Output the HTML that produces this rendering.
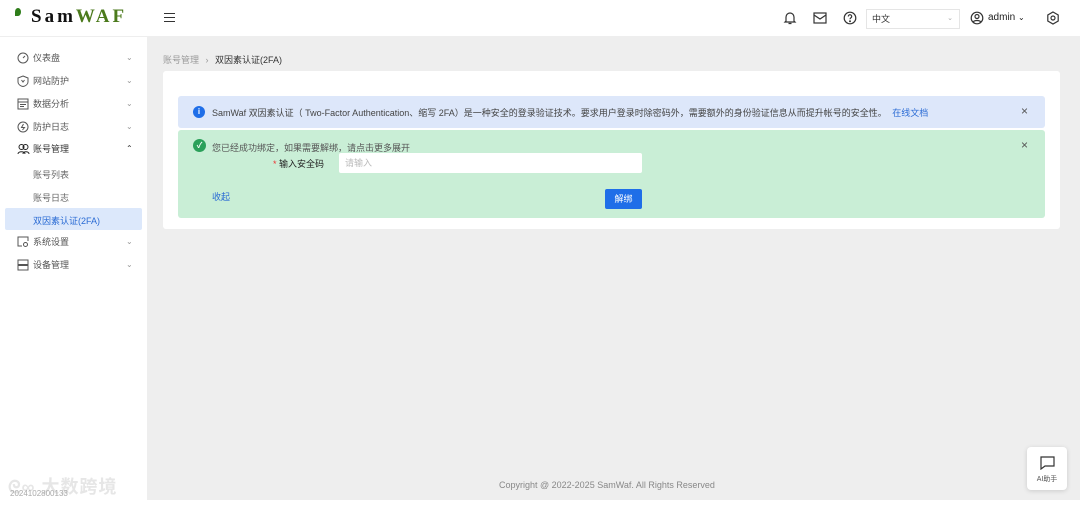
<!DOCTYPE html>
<html><head><meta charset="utf-8"><style>
*{box-sizing:border-box;margin:0;padding:0}
body{width:1080px;height:506px;overflow:hidden;background:#fff;font-family:"Liberation Sans","Noto Sans CJK SC",sans-serif;font-size:9px;color:#333;position:relative}
.hdr{position:absolute;left:0;top:0;width:1080px;height:37px;background:#fff;border-bottom:1px solid #eee}
.side{position:absolute;left:0;top:37px;width:147px;height:469px;background:#fff}
.main{position:absolute;left:147px;top:37px;width:933px;height:463px;background:#eeeeee}
.mi{position:absolute;left:17px;height:20px;line-height:20px;font-size:9px;color:#555;width:120px}
.mi svg{position:absolute;left:0;top:4px}
.mi span{position:absolute;left:16px}
.mi .ar{position:absolute;left:109px;top:0;color:#999;font-size:8px}
.sub{position:absolute;left:33px;font-size:9px;color:#666}
.card{position:absolute;left:16px;top:34px;width:897px;height:158px;background:#fff;border-radius:3px}
.info{position:absolute;left:15px;top:25px;width:867px;height:32px;background:#dde7fa;border-radius:3px}
.succ{position:absolute;left:15px;top:59px;width:867px;height:88px;background:#c9eed6;border-radius:3px}
</style></head><body>
<div class="hdr">
 <div style="position:absolute;left:15px;top:8px;width:6px;height:8px;background:#2e7d1a;border-radius:50% 50% 50% 0"></div>
 <div style="position:absolute;left:31px;top:6px;font-family:'Liberation Serif',serif;font-weight:bold;font-size:19px;letter-spacing:3px"><span style="color:#111">Sam</span><span style="color:#4b7a1c">WAF</span></div>
 <div style="position:absolute;left:164px;top:13px;width:11px;height:9px;border-top:1.5px solid #333;border-bottom:1.5px solid #333"><div style="margin-top:2.5px;height:1.5px;background:#333"></div></div>
 <svg style="position:absolute;left:783px;top:11px" width="14" height="14" viewBox="0 0 14 14" fill="none" stroke="#333" stroke-width="1.2"><path d="M3 10V6a4 4 0 018 0v4l1 1H2z M5.5 12.5h3"/></svg>
 <svg style="position:absolute;left:813px;top:12px" width="14" height="12" viewBox="0 0 14 12" fill="none" stroke="#333" stroke-width="1.2"><rect x="1" y="1" width="12" height="10"/><path d="M1 3l6 4 6-4"/></svg>
 <svg style="position:absolute;left:843px;top:11px" width="14" height="14" viewBox="0 0 14 14" fill="none" stroke="#333" stroke-width="1.2"><circle cx="7" cy="7" r="5.8"/><path d="M5.3 5.5a1.7 1.7 0 113 1c-.8.5-1.3.8-1.3 1.8"/><circle cx="7" cy="10.2" r=".4" fill="#333"/></svg>
 <div style="position:absolute;left:866px;top:9px;width:94px;height:20px;border:1px solid #e5e5e5;font-size:9px;line-height:18px;padding-left:5px">中文<span style="position:absolute;right:6px;color:#aaa;font-size:7px">⌄</span></div>
 <svg style="position:absolute;left:970px;top:11px" width="14" height="14" viewBox="0 0 14 14" fill="none" stroke="#333" stroke-width="1.2"><circle cx="7" cy="7" r="5.8"/><circle cx="7" cy="5.5" r="2"/><path d="M3.3 11c1-2 6.4-2 7.4 0"/></svg>
 <div style="position:absolute;left:988px;top:12px;font-size:10px;color:#222">admin <span style="font-size:8px">⌄</span></div>
 <svg style="position:absolute;left:1046px;top:11px" width="14" height="14" viewBox="0 0 14 14" fill="none" stroke="#333" stroke-width="1.2"><path d="M7 1l5.2 3v6L7 13 1.8 10V4z"/><circle cx="7" cy="7" r="2"/></svg>
</div>
<div class="side">
 <div class="mi" style="top:11px"><svg width="12" height="12" viewBox="0 0 12 12" fill="none" stroke="#555"><circle cx="6" cy="6" r="5"/><path d="M6 6l2-2"/></svg><span>仪表盘</span><span class="ar">⌄</span></div>
 <div class="mi" style="top:34px"><svg width="12" height="12" viewBox="0 0 12 12" fill="none" stroke="#555"><path d="M6 1l5 2v4c0 2-2 4-5 4.5C3 11 1 9 1 7V3z"/><path d="M4.5 5l1.5 2 1.5-2"/></svg><span>网站防护</span><span class="ar">⌄</span></div>
 <div class="mi" style="top:57px"><svg width="12" height="12" viewBox="0 0 12 12" fill="none" stroke="#555"><rect x="1" y="1" width="10" height="10"/><path d="M1 4h10M3 6.5h6M3 8.5h4"/></svg><span>数据分析</span><span class="ar">⌄</span></div>
 <div class="mi" style="top:80px"><svg width="12" height="12" viewBox="0 0 12 12" fill="none" stroke="#555"><circle cx="6" cy="6" r="5"/><path d="M6.5 3L4.5 6.5h3L5.5 9"/></svg><span>防护日志</span><span class="ar">⌄</span></div>
 <div class="mi" style="top:102px;color:#333"><svg width="13" height="12" viewBox="0 0 13 12" fill="none" stroke="#222"><circle cx="4.5" cy="4" r="2.5"/><circle cx="8.5" cy="4" r="2.5"/><path d="M1 11c0-3 7-3 7 0M6 11c0-3 6-3 6 0"/></svg><span>账号管理</span><span class="ar" style="color:#333">⌃</span></div>
 <div class="sub" style="top:131px">账号列表</div>
 <div class="sub" style="top:154px">账号日志</div>
 <div style="position:absolute;left:5px;top:171px;width:137px;height:22px;background:#dce8fb;border-radius:2px"></div>
 <div class="sub" style="top:177px;color:#2a6bd4">双因素认证(2FA)</div>
 <div class="mi" style="top:195px"><svg width="12" height="12" viewBox="0 0 12 12" fill="none" stroke="#555"><path d="M5 10H1V1h10v4"/><circle cx="8.5" cy="8.5" r="2"/></svg><span>系统设置</span><span class="ar">⌄</span></div>
 <div class="mi" style="top:218px"><svg width="12" height="12" viewBox="0 0 12 12" fill="none" stroke="#555"><rect x="1" y="1" width="10" height="4.5"/><rect x="1" y="6.5" width="10" height="4.5"/></svg><span>设备管理</span><span class="ar">⌄</span></div>
 <div style="position:absolute;left:8px;top:436px;font-size:18px;color:#e6e6e6;font-weight:bold;letter-spacing:1px">ᘓ∞ 大数跨境</div>
 <div style="position:absolute;left:10px;top:452px;font-size:8px;color:#aaa">2024102800133</div>
</div>
<div class="main">
 <div style="position:absolute;left:16px;top:16px;font-size:9px;color:#999">账号管理 <span style="margin:0 4px">›</span> <span style="color:#333">双因素认证(2FA)</span></div>
 <div class="card">
  <div class="info">
   <div style="position:absolute;left:15px;top:10px;width:12px;height:12px;border-radius:50%;background:#1f6ee8;color:#fff;font-size:8px;text-align:center;line-height:12px;font-weight:bold">i</div>
   <div style="position:absolute;left:34px;top:10px;font-size:9px;color:#444;white-space:nowrap">SamWaf 双因素认证（ Two-Factor Authentication、缩写 2FA）是一种安全的登录验证技术。要求用户登录时除密码外，需要额外的身份验证信息从而提升帐号的安全性。 <span style="color:#2a6bd4;margin-left:3px">在线文档</span></div>
   <div style="position:absolute;right:17px;top:8px;font-size:12px;color:#555">×</div>
  </div>
  <div class="succ">
   <div style="position:absolute;left:15px;top:9px;width:13px;height:13px;border-radius:50%;background:#2aa05a;color:#fff;font-size:8px;text-align:center;line-height:13px;font-weight:bold">✓</div>
   <div style="position:absolute;left:34px;top:11px;font-size:9px;color:#555">您已经成功绑定，如果需要解绑，请点击更多展开</div>
   <div style="position:absolute;right:17px;top:8px;font-size:12px;color:#555">×</div>
   <div style="position:absolute;left:95px;top:27px;font-size:9px;color:#222"><span style="color:#e33">*</span> 输入安全码</div>
   <div style="position:absolute;left:161px;top:23px;width:303px;height:20px;background:#fff;border-radius:2px;font-size:9px;color:#bbb;line-height:20px;padding-left:6px">请输入</div>
   <div style="position:absolute;left:34px;top:60px;font-size:9px;color:#2a6bd4">收起</div>
   <div style="position:absolute;left:427px;top:59px;width:37px;height:20px;background:#1f6ee8;border-radius:2px;color:#fff;font-size:9px;text-align:center;line-height:20px">解绑</div>
  </div>
 </div>
 <div style="position:absolute;left:352px;top:443px;font-size:9px;color:#888;white-space:nowrap">Copyright @ 2022-2025 SamWaf. All Rights Reserved</div>
 <div style="position:absolute;left:880px;top:410px;width:40px;height:43px;background:#fff;border-radius:4px;box-shadow:0 1px 5px rgba(0,0,0,.15)">
  <svg style="position:absolute;left:13px;top:9px" width="15" height="14" viewBox="0 0 15 14" fill="none" stroke="#333" stroke-width="1.2"><path d="M1 1h13v9H5l-4 3z"/></svg>
  <div style="position:absolute;top:27px;width:40px;text-align:center;font-size:7px;color:#555">AI助手</div>
 </div>
</div>
</body></html>
